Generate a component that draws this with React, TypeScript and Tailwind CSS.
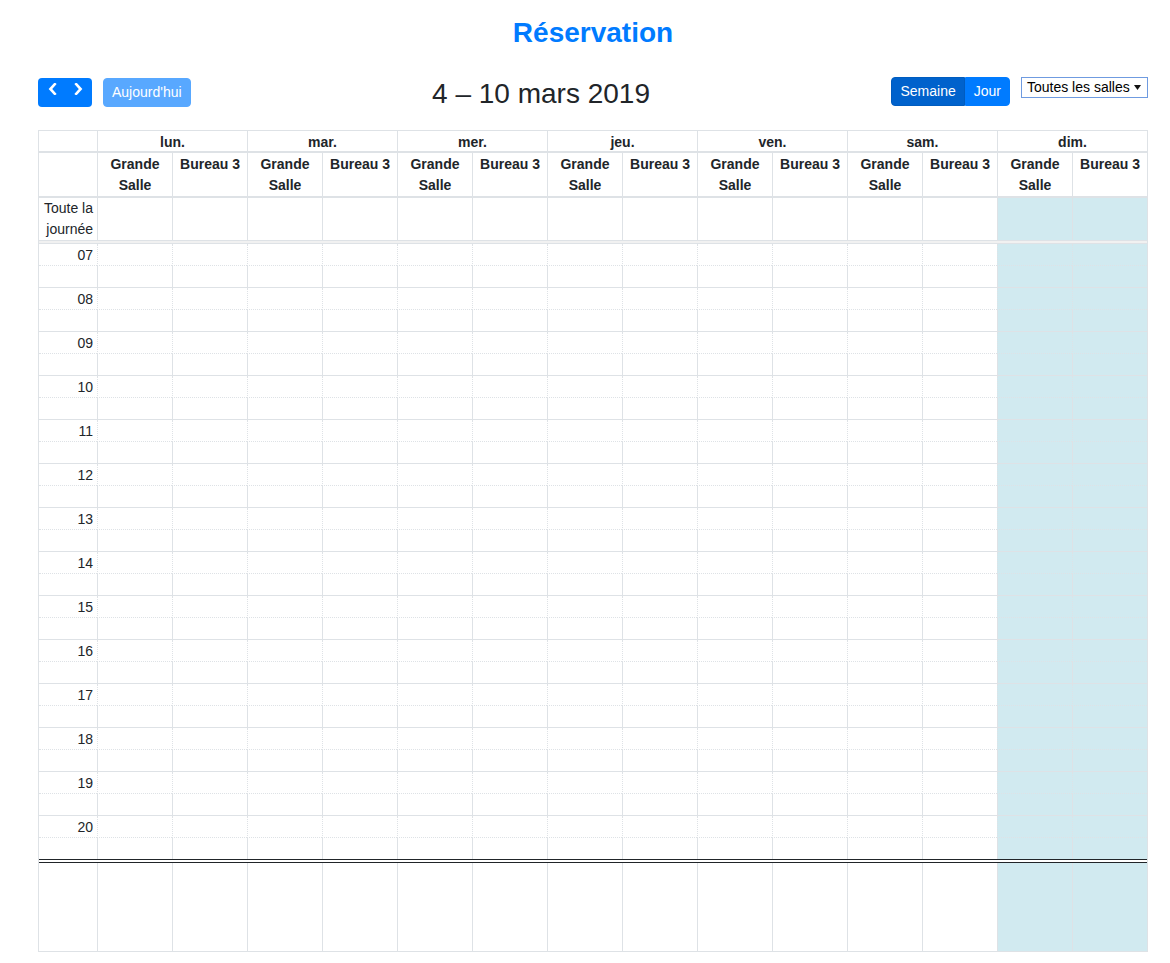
import React from 'react';

const days = ['lun.', 'mar.', 'mer.', 'jeu.', 'ven.', 'sam.', 'dim.'];
const resources = ['Grande Salle', 'Bureau 3'];
const hours = ['07', '08', '09', '10', '11', '12', '13', '14', '15', '16', '17', '18', '19', '20'];

// 14 resource columns, the last two (dim.) are "today"
const cols = Array.from({ length: 14 }, (_, i) => i);
const isToday = (i: number) => i >= 12;

function Chevron({ dir }: { dir: 'left' | 'right' }) {
  return (
    <svg width="9" height="12" viewBox="0 0 9 12" fill="none">
      <path
        d={dir === 'left' ? 'M6.8 1.2 L2.4 6 L6.8 10.8' : 'M2.2 1.2 L6.6 6 L2.2 10.8'}
        stroke="white"
        strokeWidth="2.6"
        strokeLinecap="square"
        strokeLinejoin="miter"
      />
    </svg>
  );
}

function Toolbar() {
  return (
    <div className="mt-[25px] flex h-[34px] items-center justify-between">
      <div className="flex items-center">
        <div className="flex h-[29px] overflow-hidden rounded-[4px] bg-[#007bff]">
          <button className="flex w-[27px] justify-center pt-[5px] pl-[1px]">
            <Chevron dir="left" />
          </button>
          <button className="flex w-[27px] justify-center pt-[5px] pr-[1px]">
            <Chevron dir="right" />
          </button>
        </div>
        <button className="ml-[11px] h-[29px] rounded-[4px] border border-[#007bff] bg-[#007bff] px-2 text-[14px] leading-[21px] text-white opacity-65">
          Aujourd'hui
        </button>
      </div>

      <h2 className="pt-[4px] text-[28px] leading-[34px] text-[#212529]">4 – 10 mars 2019</h2>

      <div className="flex items-start self-start pt-[2px]">
        <div className="flex h-[29px] text-[14px] leading-[21px] text-white">
          <button className="rounded-l-[4px] border border-[#005cbf] bg-[#0062cc] px-2">Semaine</button>
          <button className="rounded-r-[4px] border border-[#007bff] bg-[#007bff] px-2">Jour</button>
        </div>
        <div className="ml-[11px] flex h-[21px] w-[127px] items-center justify-between border border-[#6f9be0] pr-[6px] pl-[5px] text-[14px] leading-[19px] text-black">
          <span>Toutes les salles</span>
          <svg width="7" height="5" viewBox="0 0 7 5">
            <path d="M0 0 H7 L3.5 5 Z" fill="#111" />
          </svg>
        </div>
      </div>
    </div>
  );
}

function Calendar() {
  return (
    <div className="mt-[21px] border border-[#dee2e6] text-[14px] text-[#212529]">
      {/* day header */}
      <div className="grid grid-cols-[58px_repeat(7,150px)] border-b-2 border-[#dee2e6]">
        <div className="h-[20px]" />
        {days.map((d) => (
          <div key={d} className="h-[20px] border-l border-[#dee2e6] text-center font-bold leading-[22px]">
            {d}
          </div>
        ))}
      </div>

      {/* resource header */}
      <div className="grid grid-cols-[58px_repeat(14,75px)] border-b-2 border-[#dee2e6]">
        <div className="h-[43px]" />
        {cols.map((i) => (
          <div key={i} className="h-[43px] border-l border-[#dee2e6] px-[2px] pt-[1px] text-center font-bold leading-[21px]">
            {resources[i % 2]}
          </div>
        ))}
      </div>

      {/* all-day row */}
      <div className="grid grid-cols-[58px_repeat(14,75px)]">
        <div className="h-[42px] pr-[4px] text-right leading-[21px]">Toute la journée</div>
        {cols.map((i) => (
          <div key={i} className={`h-[42px] border-l border-[#dee2e6] ${isToday(i) ? 'bg-[#d1eaf0]' : ''}`} />
        ))}
      </div>

      <div className="h-[4px] border-y border-[#dee2e6] bg-[#f1f1f1]" />

      {/* time slots */}
      {hours.flatMap((h) => [0, 1].map((half) => ({ h, half }))).map(({ h, half }, idx, arr) => {
        const last = idx === arr.length - 1;
        const line = last ? '' : half === 0 ? 'border-b border-dotted' : 'border-b';
        return (
          <div key={idx} className="grid grid-cols-[58px_repeat(14,75px)]">
            <div className={`${last ? 'h-[21px]' : 'h-[22px]'} border-[#dee2e6] pt-[1px] pr-[4px] text-right leading-[21px] ${line}`}>
              {half === 0 ? h : ''}
            </div>
            {cols.map((i) => (
              <div
                key={i}
                className={`${last ? 'h-[21px]' : 'h-[22px]'} border-l border-[#dee2e6] ${line} ${isToday(i) ? 'bg-[#d1eaf0]' : ''}`}
              />
            ))}
          </div>
        );
      })}

      {/* remaining space */}
      <div className="grid grid-cols-[58px_repeat(14,75px)] border-t-4 border-double border-[#212529]">
        <div className="h-[88px]" />
        {cols.map((i) => (
          <div key={i} className={`h-[88px] border-l border-[#dee2e6] ${isToday(i) ? 'bg-[#d1eaf0]' : ''}`} />
        ))}
      </div>
    </div>
  );
}

export default function App() {
  return (
    <div className="min-h-[963px] bg-white font-['Liberation_Sans',Arial,sans-serif]">
      <div className="ml-[38px] w-[1110px] pt-[16px]">
        <h2 className="text-center text-[28px] font-bold leading-[34px] text-[#007bff]">Réservation</h2>
        <Toolbar />
        <Calendar />
      </div>
    </div>
  );
}
